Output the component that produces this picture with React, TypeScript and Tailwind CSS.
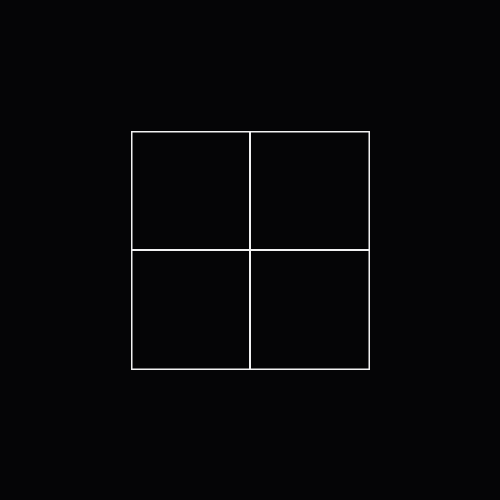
export default function App() {
  return (
    <div className="w-[500px] h-[500px] bg-[#050506] flex items-center justify-center">
      <svg width="240" height="240" viewBox="0 0 240 240" className="block">
        <rect x="1.75" y="1.75" width="237.5" height="237.5" fill="none" stroke="#f2f2f2" strokeWidth="1.5" />
        <line x1="120" y1="1" x2="120" y2="240" stroke="#f2f2f2" strokeWidth="2" />
        <line x1="1" y1="120" x2="240" y2="120" stroke="#f2f2f2" strokeWidth="2" />
      </svg>
    </div>
  );
}
